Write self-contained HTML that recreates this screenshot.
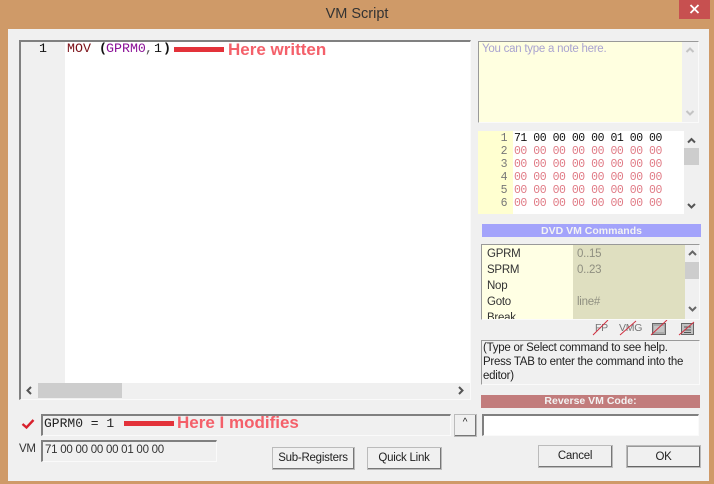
<!DOCTYPE html>
<html><head><meta charset="utf-8">
<style>
html,body{margin:0;padding:0}
body{width:714px;height:484px;overflow:hidden;background:#cf9a68;position:relative;font-family:"Liberation Sans",sans-serif;font-size:11.5px;letter-spacing:-.25px;color:#222}
div{position:absolute;box-sizing:border-box;white-space:pre}
svg{position:absolute}
.mono{font-family:"Liberation Mono",monospace;font-size:11.5px;line-height:13px;letter-spacing:-.47px}
.ed{font-family:"Liberation Mono",monospace;font-size:13.3px;line-height:14px;letter-spacing:0;top:42px}
.sunk{border:1px solid #fafafa;border-top:2px solid #808080;border-left:2px solid #808080}
.thin{border:1px solid #fafafa;border-top:1px solid #999;border-left:1px solid #999}
.btn{background:#f0f0f0;border:1px solid #fff;border-right:2px solid #777;border-bottom:2px solid #777;outline:1px solid #bbb;outline-offset:-1px;text-align:center;color:#222}
.ann{color:#f4606a;font-weight:bold;font-size:17px;line-height:17px;letter-spacing:0}
.line{background:#e3323a;height:5px}
.hdr{color:#f3f3f3;font-weight:bold;font-size:10.5px;letter-spacing:0;text-align:center}
.r{color:#e07a85}
.ln{color:#777;width:30px;text-align:right}
.hr{left:514px}
.thumb{background:#cdcdcd}
.ic{color:#777;font-size:10.5px;line-height:12px}
</style></head><body>
<div style="left:0;top:0;width:714px;height:29px;line-height:29px;text-align:center;font-size:14.5px;letter-spacing:0;color:#333">VM Script</div>
<div style="left:679px;top:0;width:31px;height:19px;background:#c75050"></div>
<svg style="left:679px;top:0" width="31" height="19"><path d="M11.5 5L19.5 13M19.5 5L11.5 13" stroke="#fff" stroke-width="1.8" fill="none"/></svg>
<div style="left:8px;top:29px;width:701px;height:452px;background:#f0f0f0"></div>

<!-- editor -->
<div class="sunk" style="left:19px;top:40px;width:452px;height:360px;background:#fff"></div>
<div style="left:21px;top:42px;width:44px;height:341px;background:#f0f0f0"></div>
<div class="ed" style="left:39px;color:#111">1</div>
<div class="ed" style="left:67px;color:#7b0f16">MOV</div>
<div class="ed" style="left:99px;color:#111;font-weight:bold">(</div>
<div class="ed" style="left:106px;color:#8a0f96">GPRM0</div>
<div class="ed" style="left:145px;color:#555">,</div>
<div class="ed" style="left:154px;color:#111">1</div>
<div class="ed" style="left:163px;color:#111;font-weight:bold">)</div>
<div class="line" style="left:174px;top:47px;width:50px"></div>
<div class="ann" style="left:228px;top:41px">Here written</div>
<div style="left:21px;top:383px;width:449px;height:16px;background:#f0f0f0"></div>
<div class="thumb" style="left:38px;top:383px;width:84px;height:15px"></div>
<svg style="left:21px;top:383px" width="449" height="16"><path d="M10 4L6.5 7.5L10 11M438 4L441.5 7.5L438 11" stroke="#555" stroke-width="2" fill="none"/></svg>

<!-- note -->
<div class="thin" style="left:478px;top:41px;width:221px;height:82px;background:#ffffe0"></div>
<div style="left:682px;top:42px;width:16px;height:80px;background:#f0f0f0"></div>
<div style="left:482px;top:43px;color:#a9a3d0">You can type a note here.</div>
<svg style="left:682px;top:42px" width="16" height="80"><path d="M4.5 10L8 6.5L11.5 10M4.5 69L8 72.5L11.5 69" stroke="#c4c4c4" stroke-width="2" fill="none"/></svg>

<!-- hex -->
<div style="left:478px;top:131px;width:206px;height:83px;background:#fff"></div>
<div style="left:478px;top:131px;width:35px;height:83px;background:#ffffd0"></div>
<div class="mono" style="left:0;top:131px;width:714px;height:83px">
<div class="ln" style="left:477px;top:1px">1</div><div class="hr" style="top:1px;color:#111">71 00 00 00 00 01 00 00</div>
<div class="ln" style="left:477px;top:14px">2</div><div class="hr r" style="top:14px">00 00 00 00 00 00 00 00</div>
<div class="ln" style="left:477px;top:27px">3</div><div class="hr r" style="top:27px">00 00 00 00 00 00 00 00</div>
<div class="ln" style="left:477px;top:40px">4</div><div class="hr r" style="top:40px">00 00 00 00 00 00 00 00</div>
<div class="ln" style="left:477px;top:53px">5</div><div class="hr r" style="top:53px">00 00 00 00 00 00 00 00</div>
<div class="ln" style="left:477px;top:66px">6</div><div class="hr r" style="top:66px">00 00 00 00 00 00 00 00</div>
</div>
<div class="thumb" style="left:684px;top:148px;width:15px;height:17px"></div>
<svg style="left:684px;top:131px" width="16" height="83"><path d="M4 11.5L7.5 8L11 11.5M4 73L7.5 76.5L11 73" stroke="#555" stroke-width="2" fill="none"/></svg>

<div class="hdr" style="left:482px;top:224px;width:219px;height:13px;line-height:14px;background:#a3a3fb">DVD VM Commands</div>

<!-- commands -->
<div class="thin" style="left:481px;top:244px;width:219px;height:76px;background:#f0f0f0;overflow:hidden">
<div style="left:0;top:0;width:91px;height:75px;background:#ffffe4"></div>
<div style="left:91px;top:0;width:112px;height:75px;background:#dfdfc0"></div>
<div style="left:5px;top:1px;line-height:16px;color:#333">GPRM
SPRM
Nop
Goto
Break</div>
<div style="left:95px;top:1px;line-height:16px;color:#8f8f80">0..15
0..23

line#</div>
<div class="thumb" style="left:203px;top:17px;width:15px;height:17px"></div>
</div>
<svg style="left:685px;top:245px" width="15" height="75"><path d="M4 10L7.5 6.5L11 10M4 62L7.5 65.5L11 62" stroke="#666" stroke-width="2" fill="none"/></svg>

<!-- icons -->
<div class="ic" style="left:595px;top:322px">FP</div>
<div class="ic" style="left:619px;top:322px">VMG</div>
<svg style="left:585px;top:320px" width="115" height="17" viewBox="0 0 115 17">
<rect x="67.5" y="3.5" width="13" height="11" fill="#aaa" stroke="#666"/><rect x="69" y="6" width="10" height="6" fill="#c4c4c4"/>
<rect x="96.5" y="3.5" width="12" height="11" fill="#c0c0c0" stroke="#666"/><path d="M99 7h7M99 10h7M99 12.5h7" stroke="#555" fill="none"/>
<path d="M8 15L23 0M35 15L51 1M66 15L82 0M94 15L109 2" stroke="#d03040" stroke-width="1" fill="none"/>
</svg>

<!-- help -->
<div class="thin" style="left:481px;top:340px;width:219px;height:45px;line-height:14px;padding:0 0 0 1px;color:#222">(Type or Select command to see help.
Press TAB to enter the command into the
editor)</div>

<div class="hdr" style="left:481px;top:395px;width:219px;height:13px;line-height:13px;background:#c27c7c">Reverse VM Code:</div>

<!-- bottom -->
<svg style="left:21px;top:418px" width="14" height="12" viewBox="0 0 14 12"><path d="M1.5 6L5.5 9.5L12.5 2" fill="none" stroke="#d8202c" stroke-width="2.4"/></svg>
<div class="sunk" style="left:41px;top:414px;width:410px;height:22px;background:#f0f0f0"></div>
<div class="ed" style="left:44px;top:417px;font-size:13px;color:#222">GPRM0 = 1</div>
<div class="line" style="left:124px;top:421px;width:50px"></div>
<div class="ann" style="left:177px;top:414px">Here I modifies</div>

<div style="left:19px;top:443px;color:#333">VM</div>
<div class="sunk" style="left:41px;top:440px;width:176px;height:22px;background:#f0f0f0;padding:1px 0 0 2px;line-height:14px;color:#333">71 00 00 00 00 01 00 00</div>

<div class="btn" style="left:454px;top:414px;width:23px;height:23px;line-height:15px;font-size:10px">^</div>
<div class="sunk" style="left:482px;top:414px;width:217px;height:22px;background:#fff"></div>

<div class="btn" style="left:272px;top:447px;width:83px;height:23px;line-height:20px">Sub-Registers</div>
<div class="btn" style="left:367px;top:447px;width:75px;height:23px;line-height:20px">Quick Link</div>
<div class="btn" style="left:538px;top:445px;width:75px;height:23px;line-height:21px">Cancel</div>
<div class="btn" style="left:626px;top:445px;width:75px;height:23px;line-height:20px;border:2px solid #666;border-top-color:#999;border-left-color:#999">OK</div>
</body></html>
